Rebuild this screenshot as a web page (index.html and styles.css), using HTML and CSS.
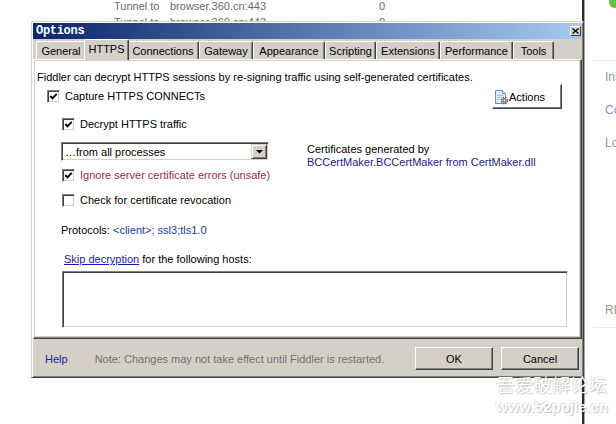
FILE: index.html
```html
<!DOCTYPE html>
<html lang="en">
<head>
<meta charset="utf-8">
<title>Options</title>
<link rel="stylesheet" href="styles.css">
</head>
<body>
<div class="desk">
  <div class="sessions">
    <div class="srow"><span class="s-host">Tunnel to</span><span class="s-url">browser.360.cn:443</span><span class="s-num">0</span></div>
    <div class="srow"><span class="s-host">Tunnel to</span><span class="s-url">browser.360.cn:443</span><span class="s-num">0</span></div>
  </div>
  <div class="side">
    <div class="side-head"><span class="side-logo"></span></div>
    <div class="side-item">Inspectors</div>
    <div class="side-item">Composer</div>
    <div class="side-item">Log</div>
    <div class="side-item side-re">REQUEST</div>
  </div>
</div>

<div class="dialog">
  <div class="titlebar">
    <span class="title">Options</span>
    <span class="close"><svg width="7" height="6" viewBox="0 0 7 6"><path d="M0.5 0.5 L6.5 5.5 M6.5 0.5 L0.5 5.5" stroke="#000" stroke-width="1.3"/></svg></span>
  </div>
  <div class="tabctl">
    <div class="tabs">
      <span class="tab t-general">General</span>
      <span class="tab t-https active">HTTPS</span>
      <span class="tab t-conn">Connections</span>
      <span class="tab t-gw">Gateway</span>
      <span class="tab t-app">Appearance</span>
      <span class="tab t-scr">Scripting</span>
      <span class="tab t-ext">Extensions</span>
      <span class="tab t-perf">Performance</span>
      <span class="tab t-tools">Tools</span>
    </div>
    <div class="frame">
      <div class="page">
        <p class="intro">Fiddler can decrypt HTTPS sessions by re-signing traffic using self-generated certificates.</p>
        <div class="row-capture">
          <label class="chk capture"><span class="box"><svg width="9" height="9" viewBox="0 0 9 9"><polyline points="1.3,4 3.5,6.3 7.7,1.8" fill="none" stroke="#000" stroke-width="1.9"/></svg></span>Capture HTTPS CONNECTs</label>
          <button class="actions"><svg class="act-icon" width="15" height="16" viewBox="0 0 15 16"><path d="M1.5 1.5 H8.5 L11.5 4.5 V14.5 H1.5 Z" fill="#e3ecf8" stroke="#6d8fc0"/><path d="M8.5 1.5 V4.5 H11.5" fill="#fff" stroke="#6d8fc0"/><path d="M3 6.5 H9 M3 8.5 H7 M3 10.5 H6" stroke="#a9c0e0"/><circle cx="10.5" cy="11.5" r="3" fill="none" stroke="#6b6b6b" stroke-width="1.8" stroke-dasharray="1.3 1.1"/><circle cx="10.5" cy="11.5" r="2" fill="#a8a8a8" stroke="#555" stroke-width="0.6"/><circle cx="10.5" cy="11.5" r="0.8" fill="#fff"/></svg>Actions</button>
        </div>
        <label class="chk decrypt"><span class="box"><svg width="9" height="9" viewBox="0 0 9 9"><polyline points="1.3,4 3.5,6.3 7.7,1.8" fill="none" stroke="#000" stroke-width="1.9"/></svg></span>Decrypt HTTPS traffic</label>
        <div class="row-proc">
          <div class="select"><span class="select-text">…from all processes</span><span class="select-btn"><svg width="7" height="4" viewBox="0 0 7 4"><polygon points="0,0 7,0 3.5,3.5" fill="#000"/></svg></span></div>
          <div class="certinfo">
            <div>Certificates generated by</div>
            <div class="certmaker">BCCertMaker.BCCertMaker from CertMaker.dll</div>
          </div>
        </div>
        <label class="chk ignore"><span class="box"><svg width="9" height="9" viewBox="0 0 9 9"><polyline points="1.3,4 3.5,6.3 7.7,1.8" fill="none" stroke="#000" stroke-width="1.9"/></svg></span><span class="unsafe">Ignore server certificate errors (unsafe)</span></label>
        <label class="chk revoke"><span class="box"></span>Check for certificate revocation</label>
        <div class="protocols">Protocols: <span class="proto-val">&lt;client&gt;; ssl3;tls1.0</span></div>
        <div class="skip"><a class="link">Skip decryption</a> for the following hosts:</div>
        <div class="hosts"></div>
      </div>
    </div>
  </div>
  <div class="footer">
    <a class="help">Help</a>
    <span class="note">Note: Changes may not take effect until Fiddler is restarted.</span>
    <button class="btn ok">OK</button>
    <button class="btn cancel">Cancel</button>
  </div>
</div>

<div class="watermark">
  <div class="wm-cn">吾爱破解论坛</div>
  <div class="wm-url">www.52pojie.cn</div>
</div>
</body>
</html>
```

FILE: styles.css
```css
* { box-sizing: border-box; }
html, body { margin: 0; padding: 0; }
body {
  width: 616px;
  height: 424px;
  overflow: hidden;
  position: relative;
  background: #fff;
  font-family: "Liberation Sans", Arial, sans-serif;
  font-size: 11px;
  color: #000;
}

/* background application */
.desk { display: flex; height: 424px; }
.sessions {
  width: 584px;
  flex: none;
  border-right: 2px solid #2b2b2b;
}
.srow {
  display: flex;
  height: 16px;
  line-height: 13px;
  color: #6a6a6a;
  white-space: nowrap;
}
.s-host { margin-left: 114px; width: 56px; }
.s-url { width: 209px; }
.side {
  flex: none;
  width: 60px;
  border-left: 1px solid #a8a8a8;
  white-space: nowrap;
  overflow: hidden;
}
.side-head {
  height: 61px;
  margin-left: 8px;
  border-bottom: 1px solid #ececec;
}
.side-logo {
  display: block;
  margin-left: 16px;
  width: 12px;
  height: 8px;
  background: #62c040;
  border-radius: 0 0 6px 6px;
}
.side-item {
  height: 33px;
  line-height: 33px;
  padding-left: 20px;
  font-size: 12px;
  color: #8398b4;
}
.side-re {
  margin-top: 134px;
  color: #9a9a9a;
  border-bottom: 1px solid #ececec;
  margin-left: 8px;
  padding-left: 12px;
  height: 34px;
}

/* dialog window */
.dialog {
  position: absolute;
  left: 31px;
  top: 21px;
  width: 553px;
  height: 357px;
  display: flex;
  flex-direction: column;
  padding: 1px;
  background: #d4d0c8;
  border: 1px solid;
  border-color: #d4d0c8 #404040 #404040 #d4d0c8;
  box-shadow: inset 1px 1px #fff, inset -1px -1px #808080;
}
.titlebar {
  height: 16px;
  flex: none;
  display: flex;
  align-items: center;
  justify-content: space-between;
  padding: 0 1px 0 3px;
  background: linear-gradient(to right, #0a246a, #a6caf0);
}
.title {
  color: #fff;
  font-family: "Liberation Mono", monospace;
  font-weight: bold;
  font-size: 12px;
  letter-spacing: -0.3px;
}
.close {
  width: 11px;
  height: 10px;
  display: flex;
  align-items: center;
  justify-content: center;
  background: #d4d0c8;
  border: 1px solid;
  border-color: #fff #404040 #404040 #fff;
}

/* tab control */
.tabctl { height: 300px; flex: none; display: flex; flex-direction: column; }
.tabs {
  height: 20px;
  flex: none;
  display: flex;
  align-items: flex-end;
  padding-left: 3px;
  position: relative;
  z-index: 1;
}
.tab {
  flex: none;
  height: 18px;
  display: flex;
  align-items: center;
  justify-content: center;
  background: #d4d0c8;
  border: 1px solid;
  border-bottom: none;
  border-color: #fff #404040 transparent #fff;
  border-radius: 2px 2px 0 0;
  box-shadow: inset -1px 0 #808080;
  white-space: nowrap;
}
.tab.active {
  height: 21px;
  margin: 0 -2px -1px;
  padding-bottom: 2px;
  position: relative;
  z-index: 2;
}
.t-general { width: 50px; }
.t-https { width: 45px; }
.t-conn { width: 72px; }
.t-gw { width: 54px; }
.t-app { width: 72px; }
.t-scr { width: 51px; }
.t-ext { width: 64px; }
.t-perf { width: 73px; }
.t-tools { width: 41px; }

.frame {
  flex: 1;
  display: flex;
  padding: 1px 2px 2px 1px;
  border: 1px solid;
  border-color: #fff #404040 #404040 #fff;
  box-shadow: inset -1px -1px #808080;
}
.page {
  flex: 1;
  display: flex;
  flex-direction: column;
  align-items: flex-start;
  background: #fff;
  padding: 10px 0 0 2px;
}
.intro { margin: 0; line-height: 13px; }

/* checkboxes */
.chk {
  display: flex;
  align-items: center;
  gap: 5px;
  height: 13px;
  line-height: 13px;
  white-space: nowrap;
}
.box {
  width: 13px;
  height: 13px;
  flex: none;
  display: flex;
  align-items: center;
  justify-content: center;
  background: #fff;
  border: 1px solid;
  border-color: #808080 #fff #fff #808080;
  box-shadow: inset 1px 1px #404040, inset -1px -1px #d4d0c8;
}

.row-capture {
  align-self: stretch;
  display: flex;
  justify-content: space-between;
  align-items: flex-start;
  height: 25px;
  padding: 0 17px 0 10px;
}
.capture { margin-top: 6px; }
.actions {
  width: 70px;
  height: 25px;
  display: flex;
  align-items: center;
  padding: 0 0 0 1px;
  font: inherit;
  color: #000;
  background: #fff;
  border: 1px solid;
  border-color: #fff #404040 #404040 #fff;
  box-shadow: inset -1px -1px #808080;
}
.act-icon { flex: none; }

.decrypt { margin: 9px 0 0 25px; }

.row-proc {
  display: flex;
  align-items: flex-start;
  height: 27px;
  margin: 11px 0 0 24px;
}
.select {
  width: 208px;
  height: 19px;
  display: flex;
  align-items: center;
  padding: 1px;
  background: #fff;
  border: 1px solid;
  border-color: #808080 #fff #fff #808080;
  box-shadow: inset 1px 1px #404040, inset -1px -1px #d4d0c8;
}
.select-text { flex: 1; padding-left: 2px; }
.select-btn {
  width: 16px;
  height: 15px;
  display: flex;
  align-items: center;
  justify-content: center;
  background: #d4d0c8;
  border: 1px solid;
  border-color: #d4d0c8 #404040 #404040 #d4d0c8;
  box-shadow: inset 1px 1px #fff, inset -1px -1px #808080;
}
.certinfo { margin: 1px 0 0 38px; line-height: 13px; white-space: nowrap; }
.certmaker { color: #1c1c7e; }

.ignore { margin-left: 25px; }
.unsafe { color: #9a2d50; }
.revoke { margin: 12px 0 0 25px; }
.protocols { margin: 17px 0 0 24px; line-height: 13px; }
.proto-val { color: #2a3aa0; }
.skip { margin: 16px 0 0 27px; line-height: 13px; }
.link { color: #1a1aa6; text-decoration: underline; }
.hosts {
  align-self: stretch;
  height: 57px;
  margin: 5px 11px 0 25px;
  background: #fff;
  border: 1px solid;
  border-color: #808080 #fff #fff #808080;
  box-shadow: inset 1px 1px #404040, inset -1px -1px #d4d0c8;
}

/* footer */
.footer {
  height: 37px;
  flex: none;
  display: flex;
  align-items: center;
  padding: 2px 3px 0 12px;
}
.help { color: #1e1ea8; }
.note { margin-left: 27px; color: #707070; }
.btn {
  width: 78px;
  height: 23px;
  padding: 0;
  font: inherit;
  color: #000;
  background: #d4d0c8;
  border: 1px solid;
  border-color: #fff #404040 #404040 #fff;
  box-shadow: inset -1px -1px #808080;
}
.ok { margin-left: auto; }
.cancel { margin-left: 8px; }

/* watermark overlay */
.watermark {
  position: absolute;
  left: 496px;
  top: 374px;
  color: #fff;
  text-align: center;
  text-shadow: 1px 1px 1px rgba(0,0,0,0.22), -1px -1px 1px rgba(0,0,0,0.12);
}
.wm-cn {
  font-family: "Noto Sans CJK SC", sans-serif;
  font-size: 18px;
  line-height: 21px;
  letter-spacing: 0.5px;
}
.wm-url {
  margin-top: 3px;
  font-family: "Liberation Sans", Arial, sans-serif;
  font-size: 15px;
  font-weight: bold;
  line-height: 17px;
}
```
